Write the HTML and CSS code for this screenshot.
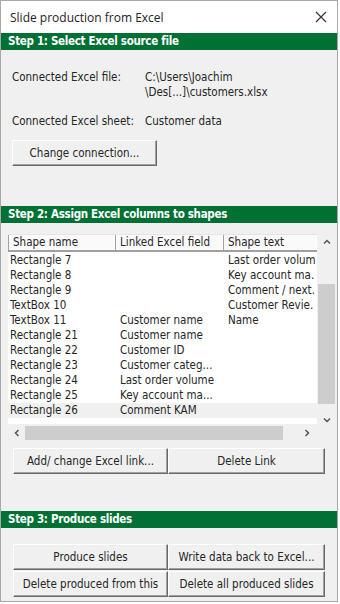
FILE: index.html
```html
<!DOCTYPE html>
<html lang="en">
<head>
  <meta charset="UTF-8" />
  <title>Slide production from Excel</title>
  <link rel="stylesheet" href="styles.css">
</head>
<body>
  <div class="window">
    <div class="titlebar">
      <span class="title">Slide production from Excel</span>
      <svg class="close" width="12" height="12" viewBox="0 0 12 12">
        <path d="M1 1 L11 11 M11 1 L1 11" stroke="#333" stroke-width="1.2" fill="none"/>
      </svg>
    </div>

    <!-- STEP 1 -->
    <div class="step-head">Step 1: Select Excel source file</div>
    <div class="step1">
      <div class="info-row">
        <span class="info-label">Connected Excel file:</span>
        <span class="info-value">C:\Users\Joachim<br>\Des[...]\customers.xlsx</span>
      </div>
      <div class="info-row sheet">
        <span class="info-label">Connected Excel sheet:</span>
        <span class="info-value">Customer data</span>
      </div>
      <button class="btn btn-change">Change connection...</button>
    </div>

    <!-- STEP 2 -->
    <div class="step-head">Step 2: Assign Excel columns to shapes</div>
    <div class="step2">
      <div class="listview">
        <div class="list-main">
          <div class="list-head">
            <div class="hcell c1">Shape name</div>
            <div class="hcell c2">Linked Excel field</div>
            <div class="hcell c3">Shape text</div>
          </div>
          <div class="list-body">
            <div class="row"><span class="c1">Rectangle 7</span><span class="c2"></span><span class="c3">Last order volum</span></div>
            <div class="row"><span class="c1">Rectangle 8</span><span class="c2"></span><span class="c3">Key account ma.</span></div>
            <div class="row"><span class="c1">Rectangle 9</span><span class="c2"></span><span class="c3">Comment / next.</span></div>
            <div class="row"><span class="c1">TextBox 10</span><span class="c2"></span><span class="c3">Customer Revie.</span></div>
            <div class="row"><span class="c1">TextBox 11</span><span class="c2">Customer name</span><span class="c3">Name</span></div>
            <div class="row"><span class="c1">Rectangle 21</span><span class="c2">Customer name</span><span class="c3"></span></div>
            <div class="row"><span class="c1">Rectangle 22</span><span class="c2">Customer ID</span><span class="c3"></span></div>
            <div class="row"><span class="c1">Rectangle 23</span><span class="c2">Customer categ...</span><span class="c3"></span></div>
            <div class="row"><span class="c1">Rectangle 24</span><span class="c2">Last order volume</span><span class="c3"></span></div>
            <div class="row"><span class="c1">Rectangle 25</span><span class="c2">Key account ma...</span><span class="c3"></span></div>
            <div class="row selected"><span class="c1">Rectangle 26</span><span class="c2">Comment KAM</span><span class="c3"></span></div>
          </div>
          <div class="hscroll">
            <svg class="arrow" width="8" height="8" viewBox="0 0 8 8"><path d="M5.5 1 L2.5 4 L5.5 7" stroke="#555" stroke-width="1.5" fill="none"/></svg>
            <div class="hthumb"></div>
            <svg class="arrow right" width="8" height="8" viewBox="0 0 8 8"><path d="M2.5 1 L5.5 4 L2.5 7" stroke="#555" stroke-width="1.5" fill="none"/></svg>
          </div>
        </div>
        <div class="vscroll">
          <svg class="arrow" width="8" height="8" viewBox="0 0 8 8"><path d="M1 5.5 L4 2.5 L7 5.5" stroke="#555" stroke-width="1.5" fill="none"/></svg>
          <div class="vtrack"><div class="vthumb"></div></div>
          <svg class="arrow" width="8" height="8" viewBox="0 0 8 8"><path d="M1 2.5 L4 5.5 L7 2.5" stroke="#555" stroke-width="1.5" fill="none"/></svg>
        </div>
      </div>
      <div class="btn-row">
        <button class="btn">Add/ change Excel link...</button>
        <button class="btn">Delete Link</button>
      </div>
    </div>

    <!-- STEP 3 -->
    <div class="step-head">Step 3: Produce slides</div>
    <div class="step3">
      <div class="btn-row">
        <button class="btn">Produce slides</button>
        <button class="btn">Write data back to Excel...</button>
      </div>
      <div class="btn-row">
        <button class="btn">Delete produced from this</button>
        <button class="btn">Delete all produced slides</button>
      </div>
    </div>
  </div>
</body>
</html>
```

FILE: styles.css
```css
* {
  margin: 0;
  padding: 0;
  box-sizing: border-box;
}

body {
  background: #ffffff;
  font-family: "DejaVu Sans", sans-serif;
  font-stretch: condensed;
  font-size: 11.5px;
  color: #262626;
}

.window {
  width: 338px;
  height: 602px;
  border: 1px solid #a8a8a8;
  background: #f0f0f0;
  overflow: hidden;
}

.titlebar {
  height: 32px;
  background: #fff;
  display: flex;
  align-items: center;
  justify-content: space-between;
  padding: 0 10px 0 9px;
}

.title {
  font-family: "Open Sans", sans-serif;
  font-stretch: normal;
  font-size: 12px;
  color: #222;
}

.step-head {
  height: 17px;
  background: #007035;
  color: #fff;
  font-weight: bold;
  font-size: 11.5px;
  letter-spacing: -0.3px;
  line-height: 17px;
  padding-left: 7px;
}

/* step 1 */
.step1 {
  height: 156px;
  padding: 20px 11px 0 11px;
}

.info-row {
  display: flex;
  line-height: 15px;
}

.info-row.sheet {
  margin-top: 14px;
}

.info-label {
  width: 133px;
}

.btn {
  font-family: inherit;
  font-stretch: condensed;
  font-size: 11.5px;
  color: #262626;
  background: #f0f0f0;
  border: 1px solid;
  border-color: #ffffff #696969 #696969 #ffffff;
  box-shadow: inset -1px -1px 0 #a0a0a0;
  height: 26px;
}

.btn-change {
  width: 145px;
  margin-top: 11px;
}

/* step 2 */
.step2 {
  height: 288px;
  padding: 11px 0 0 7px;
}

.listview {
  display: flex;
  width: 328px;
  height: 207px;
}

.list-main {
  width: 309px;
  display: flex;
  flex-direction: column;
}

.list-head {
  display: flex;
  height: 18px;
  background: #fafafa;
  border-top: 1px solid #e5e5e5;
  border-bottom: 2px solid #a0a0a0;
}

.hcell {
  line-height: 15px;
  padding-left: 4px;
  border-left: 1px solid #a0a0a0;
  border-right: 1px solid #fff;
  white-space: nowrap;
  overflow: hidden;
}

.c1 { width: 107px; }
.c2 { width: 108px; }
.c3 { width: 94px; }

.list-body {
  background: #fff;
  height: 172px;
  padding-top: 1px;
}

.row {
  display: flex;
  height: 15px;
  line-height: 15px;
}

.row span {
  padding-left: 2px;
  white-space: nowrap;
  overflow: hidden;
}

.row .c2,
.row .c3 {
  padding-left: 5px;
}

.row.selected {
  background: #f0f0f0;
}

.hscroll {
  height: 17px;
  display: flex;
  align-items: center;
  padding: 0 6px 0 5px;
}

.hthumb {
  width: 258px;
  height: 14px;
  margin-left: 4px;
  background: #cdcdcd;
}

.arrow.right {
  margin-left: auto;
}

.vscroll {
  width: 19px;
  display: flex;
  flex-direction: column;
  align-items: center;
  padding-top: 4px;
  height: 190px;
}

.vtrack {
  flex: 1;
  width: 17px;
  padding-top: 38px;
  padding-bottom: 4px;
}

.vthumb {
  height: 120px;
  background: #cdcdcd;
}

.btn-row {
  display: flex;
  padding-left: 5px;
}

.btn-row .btn {
  width: 155px;
}

.btn-row .btn + .btn {
  width: 157px;
}

.step2 .btn-row {
  margin-top: 7px;
}

/* step 3 */
.step3 {
  padding: 16px 0 0 7px;
}

.step3 .btn-row + .btn-row {
  margin-top: 1px;
}
```
